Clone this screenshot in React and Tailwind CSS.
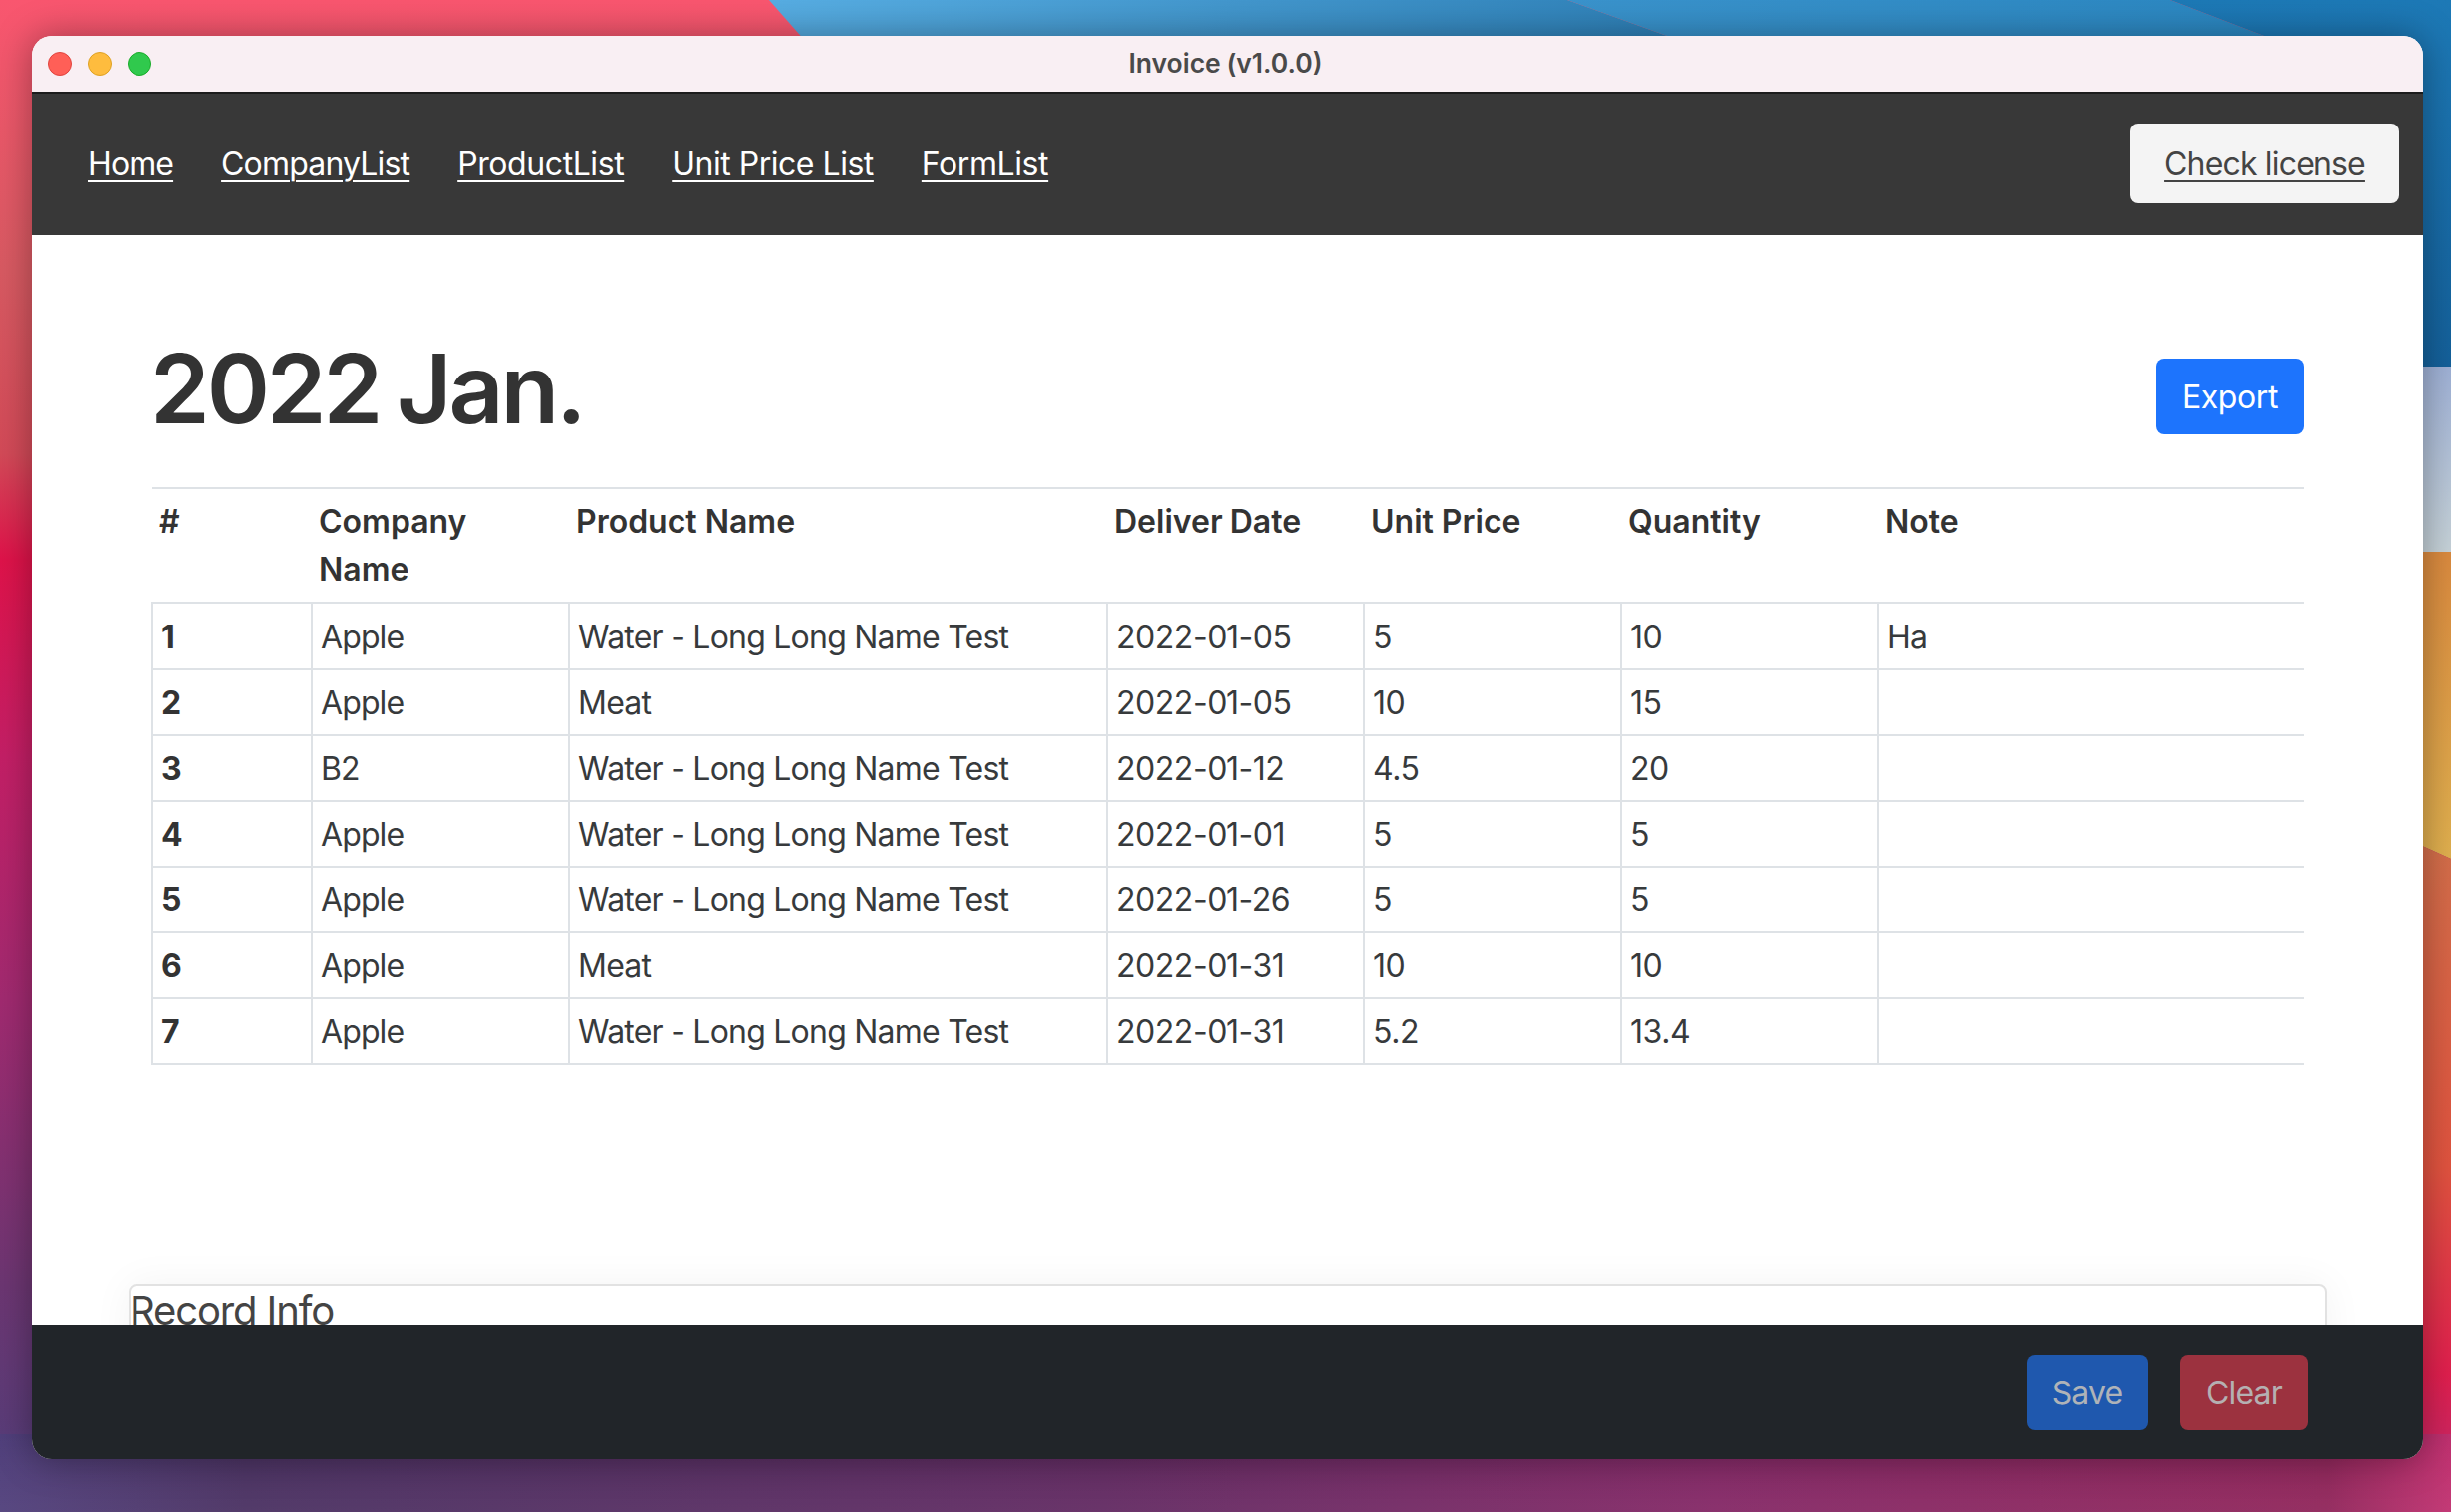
const rows = [
  { id: 1, company: 'Apple', product: 'Water - Long Long Name Test', date: '2022-01-05', price: '5', qty: '10', note: 'Ha' },
  { id: 2, company: 'Apple', product: 'Meat', date: '2022-01-05', price: '10', qty: '15', note: '' },
  { id: 3, company: 'B2', product: 'Water - Long Long Name Test', date: '2022-01-12', price: '4.5', qty: '20', note: '' },
  { id: 4, company: 'Apple', product: 'Water - Long Long Name Test', date: '2022-01-01', price: '5', qty: '5', note: '' },
  { id: 5, company: 'Apple', product: 'Water - Long Long Name Test', date: '2022-01-26', price: '5', qty: '5', note: '' },
  { id: 6, company: 'Apple', product: 'Meat', date: '2022-01-31', price: '10', qty: '10', note: '' },
  { id: 7, company: 'Apple', product: 'Water - Long Long Name Test', date: '2022-01-31', price: '5.2', qty: '13.4', note: '' },
];

const links = [
  { label: 'Home', spacing: 'tracking-[-0.028em]' },
  { label: 'CompanyList', spacing: 'tracking-[-0.026em]' },
  { label: 'ProductList', spacing: 'tracking-[-0.013em]' },
  { label: 'Unit Price List', spacing: 'tracking-[-0.015em]' },
  { label: 'FormList', spacing: 'tracking-[-0.013em]' },
];
const headers = ['#', 'Company Name', 'Product Name', 'Deliver Date', 'Unit Price', 'Quantity', 'Note'];

function Wallpaper() {
  return (
    <svg className="absolute inset-0" width="2460" height="1518" viewBox="0 0 2460 1518">
      <defs>
        <linearGradient id="left" x1="0" y1="0" x2="0" y2="1">
          <stop offset="0" stopColor="#f9566f" />
          <stop offset="0.18" stopColor="#d85a62" />
          <stop offset="0.3" stopColor="#d34a58" />
          <stop offset="0.37" stopColor="#df134a" />
          <stop offset="0.5" stopColor="#c41f66" />
          <stop offset="0.66" stopColor="#a12a70" />
          <stop offset="0.85" stopColor="#6c3672" />
          <stop offset="1" stopColor="#503f7b" />
        </linearGradient>
        <linearGradient id="bottom" x1="0" y1="0" x2="1" y2="0">
          <stop offset="0" stopColor="#503f7b" />
          <stop offset="0.1" stopColor="#4a3162" />
          <stop offset="0.45" stopColor="#622a62" />
          <stop offset="0.7" stopColor="#842866" />
          <stop offset="0.95" stopColor="#90255a" />
          <stop offset="1" stopColor="#c0306f" />
        </linearGradient>
        <linearGradient id="lift" x1="0" y1="0" x2="0" y2="1">
          <stop offset="0" stopColor="#ffffff" stopOpacity="0" />
          <stop offset="1" stopColor="#ffffff" stopOpacity="0.05" />
        </linearGradient>
        <linearGradient id="sky1" x1="0" y1="0" x2="1" y2="0.2">
          <stop offset="0" stopColor="#57ade2" />
          <stop offset="1" stopColor="#2d7fb6" />
        </linearGradient>
        <linearGradient id="sky2" x1="0" y1="0" x2="1" y2="0.1">
          <stop offset="0" stopColor="#3a93cc" />
          <stop offset="1" stopColor="#2a86c0" />
        </linearGradient>
        <linearGradient id="sky3" x1="0" y1="0" x2="0" y2="1">
          <stop offset="0" stopColor="#1d79b6" />
          <stop offset="1" stopColor="#14609a" />
        </linearGradient>
        <linearGradient id="pale" x1="0" y1="0" x2="0" y2="1">
          <stop offset="0" stopColor="#9fb1d6" />
          <stop offset="1" stopColor="#c6d2d8" />
        </linearGradient>
        <linearGradient id="orange" x1="0" y1="0" x2="0" y2="1">
          <stop offset="0" stopColor="#da8a3f" />
          <stop offset="1" stopColor="#e0b04f" />
        </linearGradient>
        <linearGradient id="red" x1="0" y1="0" x2="0" y2="1">
          <stop offset="0" stopColor="#d2704b" />
          <stop offset="0.5" stopColor="#e0533f" />
          <stop offset="0.8" stopColor="#e01f4e" />
          <stop offset="1" stopColor="#b92a70" />
        </linearGradient>
      </defs>
      <rect width="2460" height="1518" fill="url(#left)" />
      <polygon points="772,0 1573,0 1673,36 1700,100 860,100" fill="url(#sky1)" />
      <polygon points="1573,0 2178,0 2272,36 2300,100 1700,100 1673,36" fill="url(#sky2)" />
      <polygon points="2178,0 2460,0 2460,372 2300,372 2300,100 2272,36" fill="url(#sky3)" />
      <rect x="2380" y="368" width="80" height="186" fill="url(#pale)" />
      <polygon points="2380,554 2460,554 2460,862 2380,826" fill="url(#orange)" />
      <polygon points="2380,826 2460,862 2460,1518 2380,1518" fill="url(#red)" />
      <rect y="1440" width="2460" height="78" fill="url(#bottom)" />
      <rect y="1440" width="2460" height="78" fill="url(#lift)" />
    </svg>
  );
}

export default function App() {
  return (
    <div className="relative w-[2460px] h-[1518px] overflow-hidden pt-[36px] pl-[32px] font-['Inter',sans-serif] text-[#373a3c]">
      <Wallpaper />
      <div className="relative w-[2400px] h-[1429px] flex flex-col overflow-hidden rounded-[20px] bg-white shadow-[0_0_36px_rgba(0,0,0,0.35)]">
        <div className="h-[58px] shrink-0 grid grid-cols-[1fr_auto_1fr] items-center bg-[#f9eff3] border-b-2 border-[#1c1c1c] pl-[16px] pr-[16px]">
          <div className="flex gap-[16px]">
            <span className="w-[24px] h-[24px] rounded-full bg-[#ff5f57] border border-[#e0443e]"></span>
            <span className="w-[24px] h-[24px] rounded-full bg-[#febc3e] border border-[#dea123]"></span>
            <span className="w-[24px] h-[24px] rounded-full bg-[#30c94d] border border-[#1aab29]"></span>
          </div>
          <div className="text-[26.5px] font-semibold text-[#4a4a4a] pr-[4px]">Invoice (v1.0.0)</div>
          <div></div>
        </div>

        <nav className="h-[142px] shrink-0 flex items-center justify-between bg-[#383838] pl-[56px] pr-[24px]">
          <div className="flex gap-[48px]">
            {links.map(link => (
              <a key={link.label} className={`text-[32px] font-normal text-white underline underline-offset-[5px] decoration-2 ${link.spacing}`}>{link.label}</a>
            ))}
          </div>
          <button className="mb-[2px] pt-[2px] w-[270px] h-[80px] rounded-[8px] bg-[#f4f4f4] text-[32px] font-normal tracking-[-0.026em] text-[#444] underline underline-offset-[5px] decoration-2">
            Check license
          </button>
        </nav>

        <main className="flex-1 min-h-0 overflow-hidden bg-white px-[120px] pt-[94px]">
          <div className="flex items-start justify-between h-[115px] mb-[44px]">
            <h1 className="mt-[3px] -ml-[1px] text-[96px] leading-[115px] font-semibold tracking-[-0.033em] [word-spacing:-4px] text-[#333]">2022 Jan.</h1>
            <button className="mt-[30px] pt-[2px] w-[148px] h-[76px] rounded-[8px] bg-[#1d74fd] text-white text-[32px] font-normal tracking-[-0.012em]">Export</button>
          </div>

          <table className="w-[2160px] table-fixed border-collapse text-[32px] leading-[48px]">
            <colgroup>
              <col className="w-[160px]" />
              <col className="w-[258px]" />
              <col className="w-[540px]" />
              <col className="w-[258px]" />
              <col className="w-[258px]" />
              <col className="w-[258px]" />
              <col />
            </colgroup>
            <thead>
              <tr className="border-t-2 border-b-2 border-[#dee2e6]">
                {headers.map(h => (
                  <th key={h} className="pt-[9px] px-[7px] pb-[8px] text-left align-top font-semibold text-[#333]">{h}</th>
                ))}
              </tr>
            </thead>
            <tbody>
              {rows.map(row => (
                <tr key={row.id} className="border-b-2 border-[#dee2e6]">
                  <td className={`${row.id === 1 ? 'h-[67px]' : 'h-[66px]'} pt-[9px] pb-[7px] px-[8px] border-l-2 border-[#dee2e6] font-bold text-[#333]`}>{row.id}</td>
                  <td className="pt-[9px] pb-[7px] px-[8px] border-l-2 border-[#dee2e6] font-normal tracking-[-0.028em]">{row.company}</td>
                  <td className="pt-[9px] pb-[7px] px-[8px] border-l-2 border-[#dee2e6] font-normal tracking-[-0.024em]">{row.product}</td>
                  <td className="pt-[9px] pb-[7px] px-[8px] border-l-2 border-[#dee2e6] font-normal tracking-[-0.014em]">{row.date}</td>
                  <td className="pt-[9px] pb-[7px] px-[8px] border-l-2 border-[#dee2e6] font-normal tracking-[-0.014em]">{row.price}</td>
                  <td className="pt-[9px] pb-[7px] px-[8px] border-l-2 border-[#dee2e6] font-normal tracking-[-0.014em]">{row.qty}</td>
                  <td className="pt-[9px] pb-[7px] px-[8px] border-l-2 border-[#dee2e6] font-normal tracking-[-0.028em]">{row.note}</td>
                </tr>
              ))}
            </tbody>
          </table>

          <div className="mt-[220px] -ml-[23px] -mr-[24px] h-[200px] rounded-[8px] border-2 border-[#e2e2e2] bg-white text-[40px] leading-[50px] tracking-[-0.028em] indent-[-1px] text-[#444] shadow-[0_0_40px_rgba(0,0,0,0.05)]">
            Record Info
          </div>
        </main>

        <footer className="h-[135px] shrink-0 flex items-center justify-end gap-[32px] bg-[#212529] pr-[116px]">
          <button className="pt-[2px] w-[122px] h-[76px] rounded-[8px] bg-[#1f58ae] text-[#afb3b8] text-[32px] font-normal tracking-[-0.026em]">Save</button>
          <button className="pt-[2px] w-[128px] h-[76px] rounded-[8px] bg-[#9c323f] text-[#b5b0b2] text-[32px] font-normal tracking-[-0.026em]">Clear</button>
        </footer>
      </div>
    </div>
  );
}
